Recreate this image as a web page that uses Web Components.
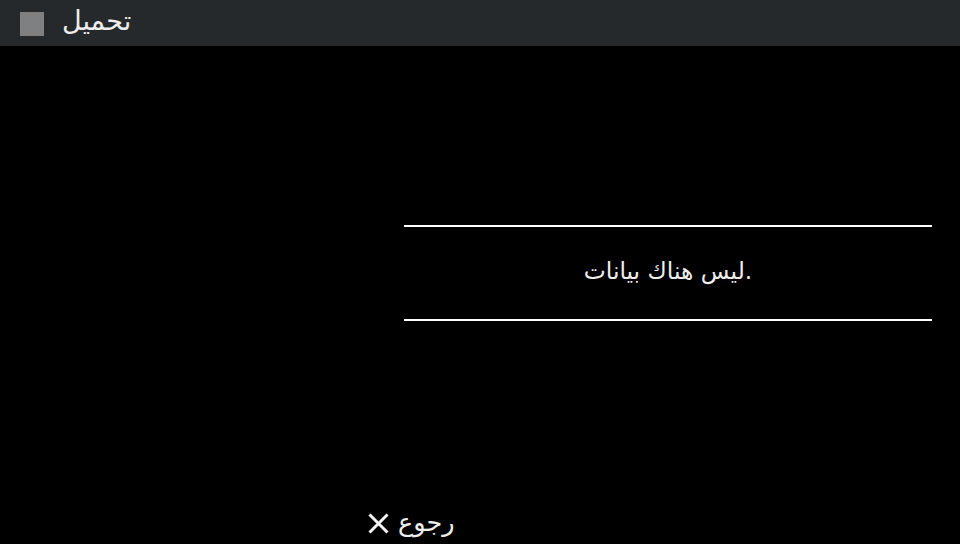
<!DOCTYPE html>
<html lang="ar">
<head>
<meta charset="utf-8">
<style>
  html, body { margin: 0; height: 100%; background: #000; }
  body { font-family: "DejaVu Sans", sans-serif; color: #fff; overflow: hidden; }
</style>
</head>
<body>
<app-screen>
  <title-bar slot="top">تحميل</title-bar>
  <empty-panel>ليس هناك بيانات.</empty-panel>
  <back-button slot="bottom">رجوع</back-button>
</app-screen>

<script>
class AppScreen extends HTMLElement {
    constructor() {
        super();
        this.attachShadow({ mode: 'open' });
        this.shadowRoot.innerHTML = `
        <style>
            :host { display: flex; flex-direction: column; width: 960px; height: 544px; background: #000; }
            main { flex: 1; display: flex; justify-content: flex-end; padding: 179px 28px 0 0; }
        </style>
        <slot name="top"></slot>
        <main><slot></slot></main>
        <slot name="bottom"></slot>
        `;
    }
}

class TitleBar extends HTMLElement {
    constructor() {
        super();
        this.attachShadow({ mode: 'open' });
        this.shadowRoot.innerHTML = `
        <style>
            :host { display: flex; align-items: center; gap: 18px; height: 46px; padding-left: 20px; background: #25292b; color: #eeeeee; }
            .icon { width: 24px; height: 24px; margin-top: 2px; background: #808080; }
            .label { font-size: 27px; line-height: 38px; height: 42px; }
        </style>
        <div class="icon"></div>
        <div class="label"><slot></slot></div>
        `;
    }
}

class EmptyPanel extends HTMLElement {
    constructor() {
        super();
        this.attachShadow({ mode: 'open' });
        this.shadowRoot.innerHTML = `
        <style>
            :host { display: flex; align-items: center; justify-content: center; box-sizing: border-box; width: 528px; height: 96px; border-top: 2px solid #fff; border-bottom: 2px solid #fff; font-size: 23.4px; direction: ltr; color: #eeeeee; }
            span { margin-top: -4px; }
        </style>
        <span><slot></slot></span>
        `;
    }
}

class BackButton extends HTMLElement {
    constructor() {
        super();
        this.attachShadow({ mode: 'open' });
        this.shadowRoot.innerHTML = `
        <style>
            :host { display: flex; align-items: center; gap: 9px; height: 40px; padding-left: 368px; font-size: 25.5px; color: #eeeeee; }
            svg { width: 21px; height: 21px; margin-top: -1px; }
            span { margin-top: -4px; }
        </style>
        <svg viewBox="0 0 21 21"><path d="M1.5 1.5 L19.5 19.5 M19.5 1.5 L1.5 19.5" stroke="#f4f4f4" stroke-width="3" fill="none"/></svg>
        <span><slot></slot></span>
        `;
    }
}

customElements.define('app-screen', AppScreen);
customElements.define('title-bar', TitleBar);
customElements.define('empty-panel', EmptyPanel);
customElements.define('back-button', BackButton);
</script>
</body>
</html>
